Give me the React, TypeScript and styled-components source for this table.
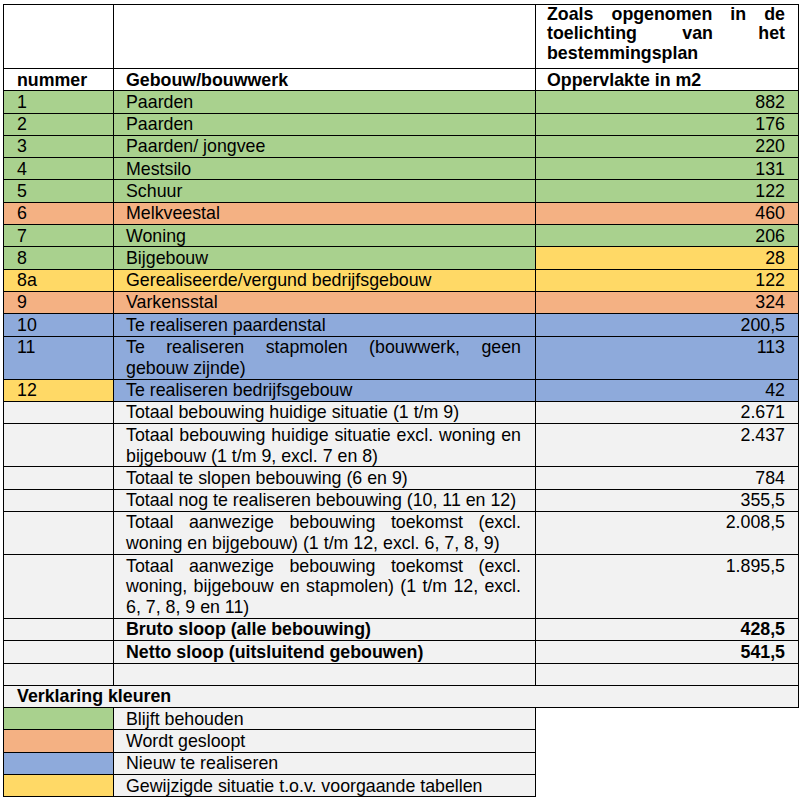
import React from 'react';
import styled, { createGlobalStyle } from 'styled-components';

const GlobalStyle = createGlobalStyle`
  html, body { margin: 0; padding: 0; background: #ffffff; }
  body { font-family: "Liberation Sans", Arial, Helvetica, sans-serif; color: #000; }
`;

type Tone = 'g' | 'o' | 'b' | 'y' | 'x' | 'w' | 'n';

const tones: Record<Tone, string> = {
  g: '#a9d18e',
  o: '#f4b183',
  b: '#8eaadb',
  y: '#ffd966',
  x: '#f2f2f2',
  w: '#ffffff',
  n: 'transparent',
};

const Page = styled.div`
  padding: 4px 0 0 3px;
`;

const Table = styled.table`
  border-collapse: collapse;
  table-layout: fixed;
  width: 796px;
  font-size: 17.8px;
  line-height: 20.8px;
`;

const Cell = styled.td<{ $tone?: Tone; $col: 1 | 2 | 3; $bold?: boolean; $bare?: boolean }>`
  background: ${(p) => tones[p.$tone ?? 'w']};
  border: ${(p) => (p.$bare ? 'none' : '1px solid #000')};
  vertical-align: top;
  padding: 0.5px 0 0 0;
  padding-left: ${(p) => (p.$col === 3 ? '11px' : p.$col === 2 ? '12px' : '13px')};
  padding-right: ${(p) => (p.$col === 3 ? '13px' : p.$col === 2 ? '14px' : '12px')};
  text-align: ${(p) => (p.$col === 3 ? 'right' : 'justify')};
  font-weight: ${(p) => (p.$bold ? 700 : 400)};
`;

const HeadCell = styled(Cell)`
  height: 63px;
  padding-top: 0;
  text-align: justify;
  line-height: 19.4px;
`;

const LabelCell = styled(Cell)`
  text-align: left;
`;

type Row = { n: string; name: string; v: string; t: [Tone, Tone, Tone]; bold?: boolean };

const rows: Row[] = [
  { n: '1', name: 'Paarden', v: '882', t: ['g', 'g', 'g'] },
  { n: '2', name: 'Paarden', v: '176', t: ['g', 'g', 'g'] },
  { n: '3', name: 'Paarden/ jongvee', v: '220', t: ['g', 'g', 'g'] },
  { n: '4', name: 'Mestsilo', v: '131', t: ['g', 'g', 'g'] },
  { n: '5', name: 'Schuur', v: '122', t: ['g', 'g', 'g'] },
  { n: '6', name: 'Melkveestal', v: '460', t: ['o', 'o', 'o'] },
  { n: '7', name: 'Woning', v: '206', t: ['g', 'g', 'g'] },
  { n: '8', name: 'Bijgebouw', v: '28', t: ['g', 'g', 'y'] },
  { n: '8a', name: 'Gerealiseerde/vergund bedrijfsgebouw', v: '122', t: ['y', 'y', 'y'] },
  { n: '9', name: 'Varkensstal', v: '324', t: ['o', 'o', 'o'] },
  { n: '10', name: 'Te realiseren paardenstal', v: '200,5', t: ['b', 'b', 'b'] },
  { n: '11', name: 'Te realiseren stapmolen (bouwwerk, geen gebouw zijnde)', v: '113', t: ['b', 'b', 'b'] },
  { n: '12', name: 'Te realiseren bedrijfsgebouw', v: '42', t: ['y', 'b', 'b'] },
  { n: '', name: 'Totaal bebouwing huidige situatie (1 t/m 9)', v: '2.671', t: ['x', 'x', 'x'] },
  { n: '', name: 'Totaal bebouwing huidige situatie excl. woning en bijgebouw (1 t/m 9, excl. 7 en 8)', v: '2.437', t: ['x', 'x', 'x'] },
  { n: '', name: 'Totaal te slopen bebouwing (6 en 9)', v: '784', t: ['x', 'x', 'x'] },
  { n: '', name: 'Totaal nog te realiseren bebouwing (10, 11 en 12)', v: '355,5', t: ['x', 'x', 'x'] },
  { n: '', name: 'Totaal aanwezige bebouwing toekomst (excl. woning en bijgebouw) (1 t/m 12, excl. 6, 7, 8, 9)', v: '2.008,5', t: ['x', 'x', 'x'] },
  { n: '', name: 'Totaal aanwezige bebouwing toekomst (excl. woning, bijgebouw en stapmolen) (1 t/m 12, excl. 6, 7, 8, 9 en 11)', v: '1.895,5', t: ['x', 'x', 'x'] },
  { n: '', name: 'Bruto sloop (alle bebouwing)', v: '428,5', t: ['x', 'x', 'x'], bold: true },
  { n: '', name: 'Netto sloop (uitsluitend gebouwen)', v: '541,5', t: ['x', 'x', 'x'], bold: true },
  { n: '', name: '\u00a0', v: '', t: ['x', 'x', 'x'] },
];

const legend: { t: Tone; label: string }[] = [
  { t: 'g', label: 'Blijft behouden' },
  { t: 'o', label: 'Wordt gesloopt' },
  { t: 'b', label: 'Nieuw te realiseren' },
  { t: 'y', label: 'Gewijzigde situatie t.o.v. voorgaande tabellen' },
];

export default function App() {
  return (
    <>
      <GlobalStyle />
      <Page>
        <Table>
          <colgroup>
            <col style={{ width: 110 }} />
            <col style={{ width: 422 }} />
            <col style={{ width: 263 }} />
          </colgroup>
          <tbody>
            <tr>
              <HeadCell $col={1} />
              <HeadCell $col={2} />
              <HeadCell $col={3} $bold>
                Zoals opgenomen in de toelichting van het bestemmingsplan
              </HeadCell>
            </tr>
            <tr>
              <LabelCell $col={1} $bold>nummer</LabelCell>
              <LabelCell $col={2} $bold>Gebouw/bouwwerk</LabelCell>
              <LabelCell $col={3} $bold>Oppervlakte in m2</LabelCell>
            </tr>
            {rows.map((r, i) => (
              <tr key={i}>
                <Cell $col={1} $tone={r.t[0]}>{r.n}</Cell>
                <Cell $col={2} $tone={r.t[1]} $bold={r.bold}>{r.name}</Cell>
                <Cell $col={3} $tone={r.t[2]} $bold={r.bold}>{r.v}</Cell>
              </tr>
            ))}
            <tr>
              <LabelCell $col={1} $tone="x" $bold colSpan={3}>Verklaring kleuren</LabelCell>
            </tr>
            {legend.map((l) => (
              <tr key={l.label}>
                <Cell $col={1} $tone={l.t} />
                <LabelCell $col={2} $tone="x">{l.label}</LabelCell>
                <Cell $col={3} $tone="n" $bare />
              </tr>
            ))}
          </tbody>
        </Table>
      </Page>
    </>
  );
}
